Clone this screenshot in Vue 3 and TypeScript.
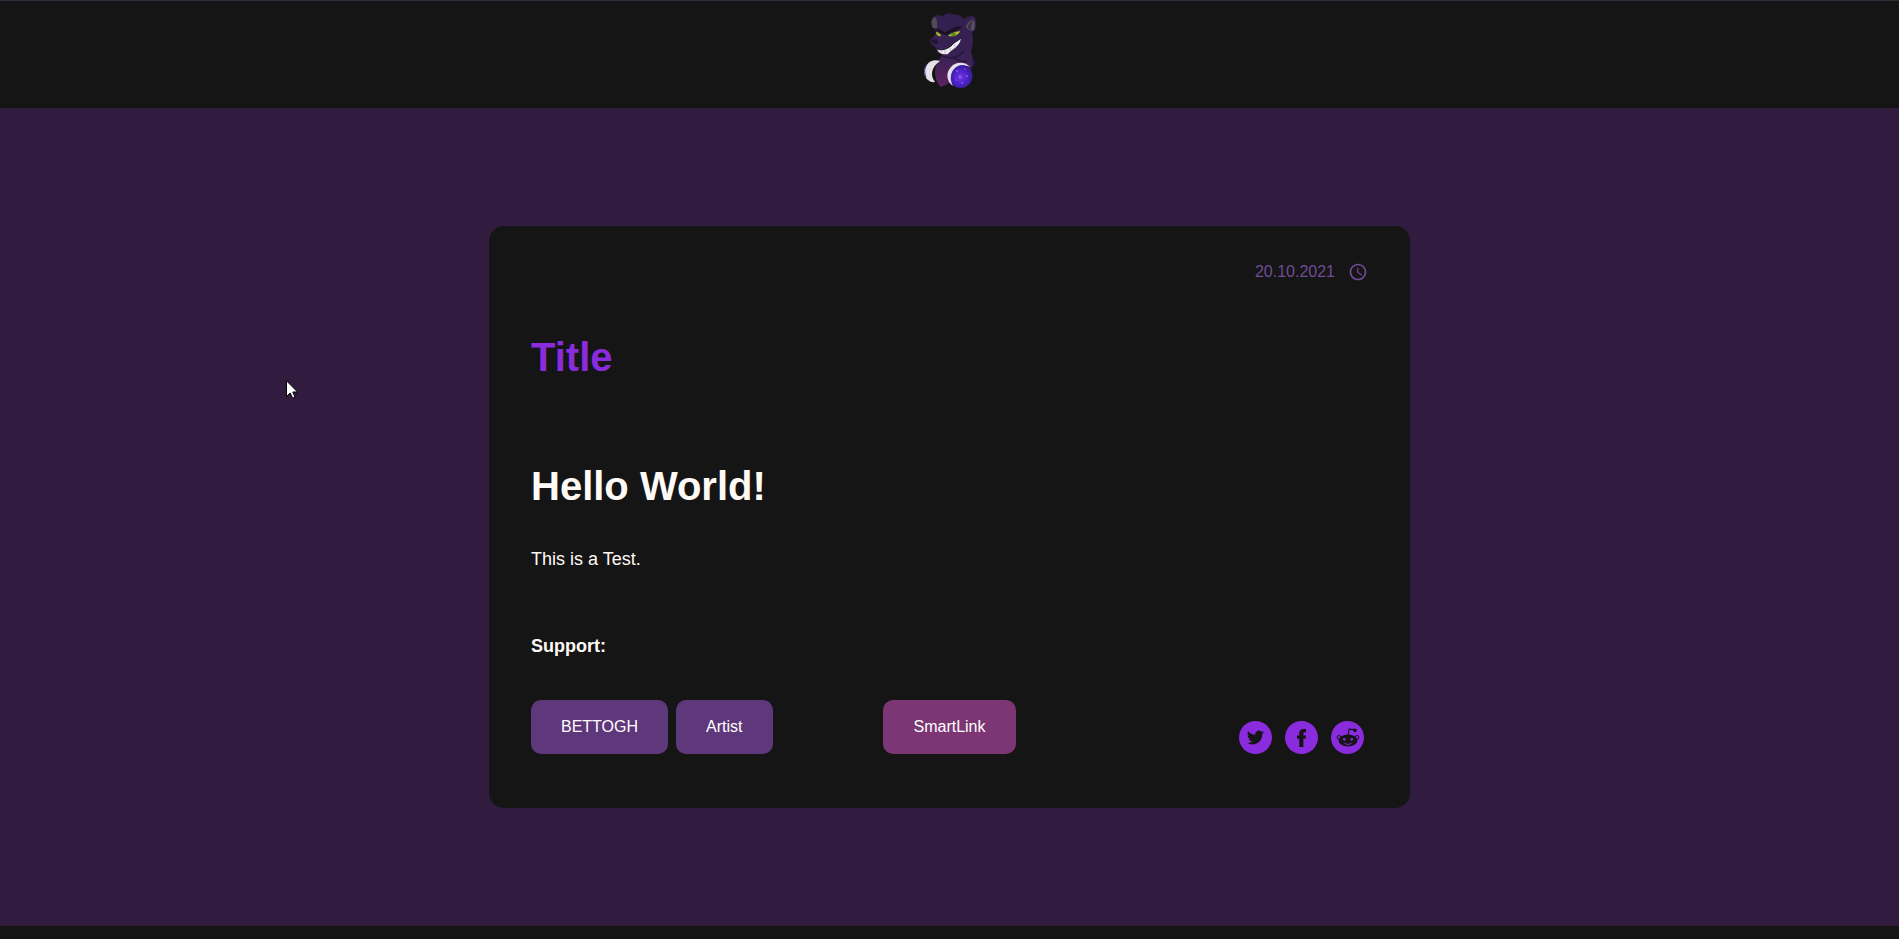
<script setup lang="ts">
interface SupportLink {
  label: string
  tone: 'violet' | 'plum'
}

const artists: SupportLink[] = [
  { label: 'BETTOGH', tone: 'violet' },
  { label: 'Artist', tone: 'violet' },
]
const smartLink: SupportLink = { label: 'SmartLink', tone: 'plum' }
</script>

<template>
  <div class="page">
    <header class="header">
      <a href="#" class="logo" aria-label="Home">
        <svg viewBox="0 1 80 107" width="80" height="107" aria-hidden="true">
          <defs>
            <linearGradient id="fur" x1="0" y1="0" x2="0" y2="1">
              <stop offset="0" stop-color="#301f4e" />
              <stop offset="0.6" stop-color="#3b2254" />
              <stop offset="1" stop-color="#5d2160" />
            </linearGradient>
            <radialGradient id="orb" cx="0.5" cy="0.55" r="0.6">
              <stop offset="0" stop-color="#7038e8" />
              <stop offset="0.5" stop-color="#4a22c4" />
              <stop offset="1" stop-color="#2c1a84" />
            </radialGradient>
          </defs>
          <path d="M57 58 66 61 64 67 58 66Z" fill="#23194f" />
          <path d="M25 29C21 25 20 18 25 16C28 14 31 15 32 17C34 14 37 13 42 13L40 15C46 13 51 16 54 19C58 16 62 15 65 17C67 25 66 31 62 33C64 40 62 48 61 52C64 58 63 68 58 76L42 82 31 87C27 84 25 77 25 72C25 64 30 58 33 54L27 53C27 50 26 47 24 46C20 44 19 40 22 38C26 35 26 32 25 29Z" fill="url(#fur)" />
          <path d="M23 28C20 23 22 18 25 17C28 20 27 25 27 29Z" fill="#514c56" />
          <path d="M64 17C58 17 54 21 53 26C56 30 61 32 64 31C66 27 66 22 64 17Z" fill="#342250" />
          <path d="M64 20C60 20 57 23 56 27C58 30 61 31 64 30C65 26 65 23 64 20Z" fill="#57505e" />
          <path d="M58 28C58 24 61 21 63 21C61 24 61 27 61 30Z" fill="#3a303f" />
          <path d="M25 28C30 29 33 31 35 33C39 30 45 26 52 26C49 31 42 31 36 35C32 34 28 32 25 28Z" fill="#171020" />
          <path d="M26 32C28 32 31 34 31 36C29 37 26 36 26 32Z" fill="#aab028" />
          <path d="M38 36C41 33 45 32 50 31C49 35 44 37 38 36Z" fill="#b7be24" />
          <ellipse cx="43.5" cy="34.4" rx="2.6" ry="1.6" fill="#508e22" />
          <path d="M21 40C25 38 28 40 28 43C26 45 22 44 21 40Z" fill="#21152f" />
          <path d="M27 49C32 51 37 49 41 46C44 42 48 41 51 38L50 42C47 48 41 50 38 54C34 55 29 54 27 49Z" fill="#f1edf5" />
          <path d="M27 49C32 51 37 49 41 46C44 42 48 41 51 38" fill="none" stroke="#160f20" stroke-width="1" />
          <path d="M31 51 31 53M35 50 35 54M40 48 41 51M44 44 45 47" stroke="#aaa0b4" stroke-width="0.6" />
          <path d="M33 56C43 60 49 57 54 51M43 57C49 62 53 62 57 61" fill="none" stroke="#24193a" stroke-width="1.4" />
          <path d="M30 61C21 58 14 65 14 72C15 79 20 83 25 82C20 76 21 67 30 61Z" fill="#e4e2e8" />
          <path d="M18 63C14 67 14 73 16 77" fill="none" stroke="#272078" stroke-width="1" />
          <circle cx="50.5" cy="76" r="12" fill="url(#orb)" />
          <g fill="#a769f5" opacity="0.75">
            <circle cx="47" cy="71" r="1" />
            <circle cx="55" cy="69" r="0.8" />
            <circle cx="50" cy="77" r="1.4" />
            <circle cx="57" cy="76" r="1" />
            <circle cx="52" cy="83" r="0.9" />
            <circle cx="46" cy="80" r="0.7" />
          </g>
          <path d="M60 67C56 62 46 61 41 67C35 73 37 82 43 86C38 77 42 66 52 65C55 65 58 66 60 67Z" fill="#e4e2e8" />
        </svg>
      </a>
    </header>

    <main class="main">
      <article class="card">
        <div class="meta">
          <time datetime="2021-10-20">20.10.2021</time>
          <svg viewBox="0 0 24 24" width="20" height="20" aria-hidden="true">
            <path fill="currentColor" d="M11.99 2C6.47 2 2 6.48 2 12s4.47 10 9.99 10C17.52 22 22 17.52 22 12S17.52 2 11.99 2zM12 20c-4.42 0-8-3.58-8-8s3.58-8 8-8 8 3.58 8 8-3.58 8-8 8zm.5-13H11v6l5.25 3.15.75-1.23-4.5-2.67z" />
          </svg>
        </div>

        <h1 class="title">Title</h1>

        <h2 class="heading">Hello World!</h2>
        <p class="text">This is a Test.</p>

        <h3 class="support">Support:</h3>

        <footer class="actions">
          <div class="links">
            <button v-for="a in artists" :key="a.label" type="button" class="btn" :class="a.tone">{{ a.label }}</button>
          </div>
          <button type="button" class="btn" :class="smartLink.tone">{{ smartLink.label }}</button>
          <nav class="social" aria-label="Share">
            <a href="#" class="round" aria-label="Twitter">
              <svg viewBox="0 0 24 24" width="17" height="17" aria-hidden="true">
                <path fill="currentColor" d="M23.95 4.57a10 10 0 0 1-2.82.78 4.96 4.96 0 0 0 2.16-2.73c-.95.56-2 .96-3.13 1.19a4.92 4.92 0 0 0-8.38 4.48C7.69 8.1 4.07 6.13 1.64 3.16a4.93 4.93 0 0 0 1.52 6.57 4.9 4.9 0 0 1-2.23-.61v.06a4.92 4.92 0 0 0 3.95 4.83 5 5 0 0 1-2.21.08 4.94 4.94 0 0 0 4.6 3.42A9.87 9.87 0 0 1 0 19.54a13.99 13.99 0 0 0 7.55 2.21c9.05 0 14-7.5 14-13.98 0-.21 0-.42-.02-.63a9.94 9.94 0 0 0 2.46-2.55z" />
              </svg>
            </a>
            <a href="#" class="round" aria-label="Facebook">
              <svg viewBox="0 0 9 18" width="9" height="18" aria-hidden="true">
                <path fill="currentColor" d="M2.2 18V9.8H0V6.6H2.2V4.6C2.2 1.6 3.8 0 6.6 0H9V3.2H7.8C6.8 3.2 6.4 3.7 6.4 4.7V6.6H9L8.6 9.8H6.4V18Z" />
              </svg>
            </a>
            <a href="#" class="round" aria-label="Reddit">
              <svg viewBox="0 0 24 20" width="24" height="20" aria-hidden="true">
                <path d="M12 7 13.2 1.2 18.5 1.6" fill="none" stroke="currentColor" stroke-width="1.2" />
                <circle cx="19" cy="2.4" r="1.8" fill="currentColor" />
                <circle cx="3" cy="9.4" r="1.9" fill="none" stroke="currentColor" stroke-width="1" />
                <circle cx="21" cy="9.4" r="1.9" fill="none" stroke="currentColor" stroke-width="1" />
                <ellipse cx="12" cy="12.6" rx="9.4" ry="6" fill="currentColor" />
                <circle class="cut" cx="8.3" cy="11.4" r="1.3" />
                <circle class="cut" cx="15.7" cy="11.4" r="1.3" />
                <path class="smile" d="M8.4 15.2C10.6 16.8 13.4 16.8 15.6 15.2" />
              </svg>
            </a>
          </nav>
        </footer>
      </article>
    </main>

    <div class="bottom"></div>

    <svg class="pointer" viewBox="0 0 12 19" width="12" height="19" aria-hidden="true">
      <path d="M.5.8V16.5L4.2 13 6.6 18.2 9 17.2 6.8 12H11.6Z" fill="#fff" stroke="#000" stroke-width="1" />
    </svg>
  </div>
</template>

<style>
body {
  margin: 0;
  background: #151515;
}
</style>

<style scoped>
.page {
  position: relative;
  display: flex;
  flex-direction: column;
  min-height: 100vh;
  box-sizing: border-box;
  background: #151515;
  color: #fffaf5;
  font-family: "Liberation Sans", Arial, sans-serif;
}

.header {
  display: flex;
  justify-content: center;
  box-sizing: border-box;
  height: 108px;
  border-top: 1px solid #2b2d3a;
}

.logo {
  display: block;
  height: 107px;
}

.main {
  flex: 1;
  display: flex;
  align-items: center;
  justify-content: center;
  background: #311b3e;
}

.card {
  box-sizing: border-box;
  width: 48.5%;
  padding: 36px 42px 54px;
  border-radius: 15px;
  background: #151515;
}

.meta {
  display: flex;
  align-items: center;
  justify-content: flex-end;
  gap: 13px;
  height: 20px;
  color: #704b96;
  font-size: 16px;
}

.title,
.heading {
  margin: 0;
  font-size: 40px;
  line-height: 46px;
}

.title {
  margin-top: 52px;
  color: #8a2bde;
}

.heading {
  margin-top: 83px;
}

.text,
.support {
  margin: 0;
  font-size: 18px;
  line-height: 20px;
}

.text {
  margin-top: 40px;
}

.support {
  margin-top: 67px;
}

.actions {
  display: grid;
  grid-template-columns: 1fr auto 1fr;
  margin-top: 44px;
}

.links {
  display: flex;
  gap: 8px;
}

.btn {
  height: 54px;
  padding: 0 30px;
  border: 0;
  border-radius: 10px;
  color: #fff;
  font: 16px "Liberation Sans", Arial, sans-serif;
}

.violet {
  background: #5f377b;
}

.plum {
  background: #7b3673;
}

.social {
  display: flex;
  align-items: flex-end;
  justify-content: flex-end;
  gap: 13px;
  padding-right: 4px;
}

.round {
  display: flex;
  align-items: center;
  justify-content: center;
  width: 33px;
  height: 33px;
  border-radius: 50%;
  background: #8a2bde;
  color: #151515;
}

.cut {
  fill: #8a2bde;
}

.smile {
  fill: none;
  stroke: #8a2bde;
  stroke-width: 1;
}

.bottom {
  height: 13px;
}

.pointer {
  position: absolute;
  left: 286px;
  top: 380px;
}
</style>
